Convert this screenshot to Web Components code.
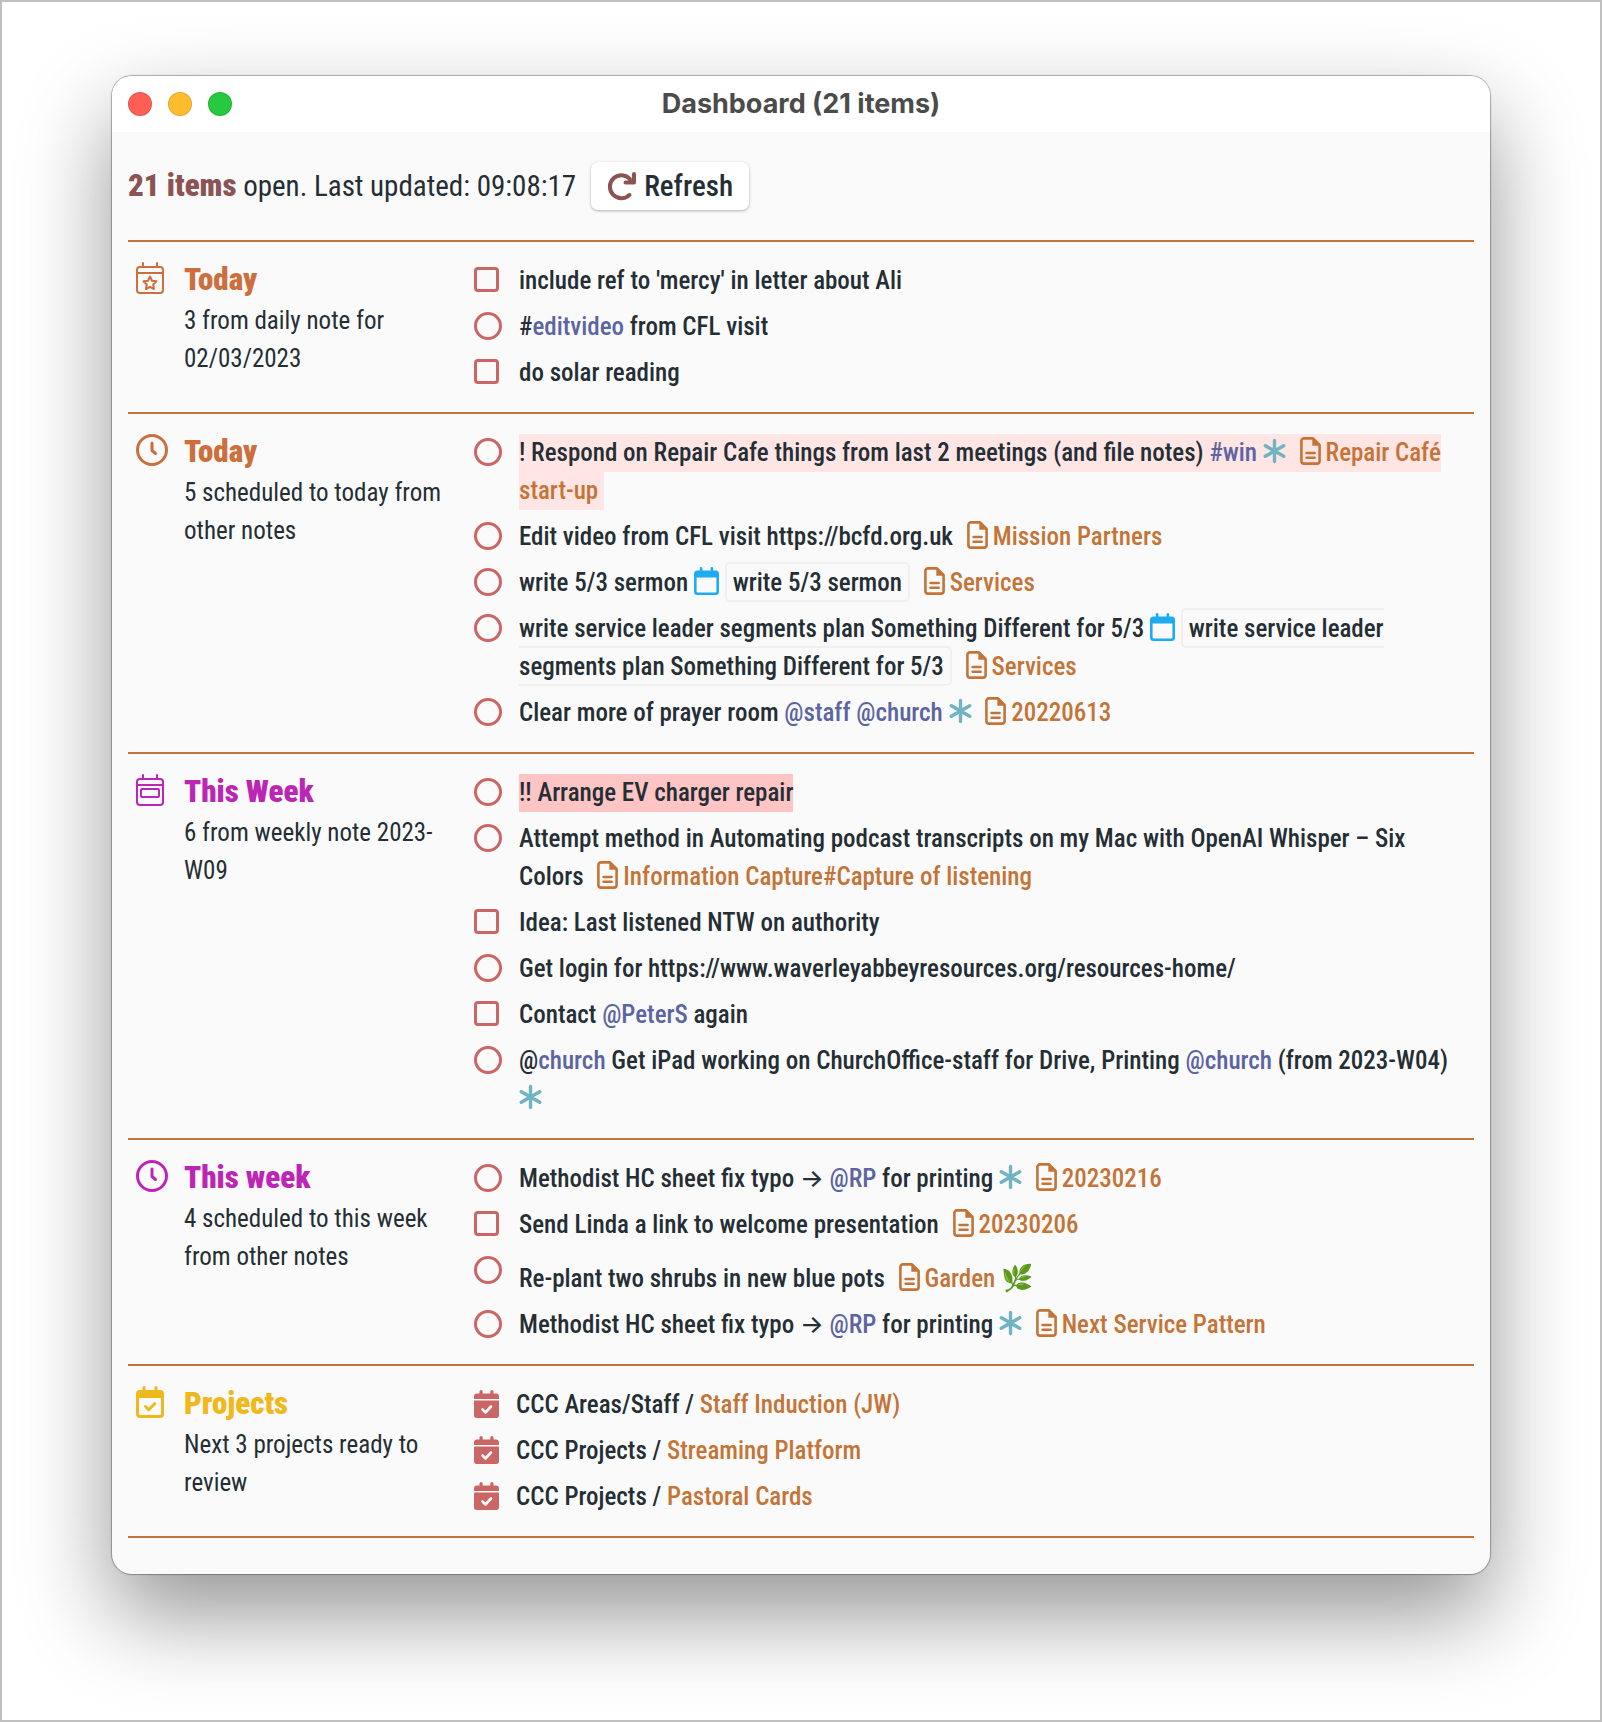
<!DOCTYPE html>
<html lang="en">
<head>
<meta charset="utf-8">
<meta name="viewport" content="width=device-width, initial-scale=1">
<title>Dashboard (21 items)</title>
<style>
html { box-sizing: border-box; }
body {
  box-sizing: border-box;
  margin: 0;
  min-height: 100vh;
  border: 2px solid #c0c0c0;
  padding: 74px 110px 146px;
  background: #fff;
  color: #242e34;
  font: 500 25px/38px "Roboto Condensed", Inter, Roboto, "Liberation Sans", sans-serif;
  --rule: #bf763e;
  --link: #c47437;
  --tag: #5c64a2;
  --marker: #cb6666;
  --accent: #8b5454;
}
</style>
</head>
<body>
<app-window heading="Dashboard (21 items)">
  <dash-summary count="21 items" text="open. Last updated: 09:08:17"></dash-summary>

  <dash-section heading="Today" icon="calendar-star" note="3 from daily note for 02/03/2023" style="--tone:#cc6f3c">
    <task-item kind="bullet">include ref to 'mercy' in letter about Ali</task-item>
    <task-item>#<text-tag>editvideo</text-tag> from CFL visit</task-item>
    <task-item kind="bullet">do solar reading</task-item>
  </dash-section>

  <dash-section heading="Today" icon="clock" note="5 scheduled to today from other notes" style="--tone:#cc6f3c">
    <task-item priority="1">! Respond on Repair Cafe things from last 2 meetings (and file notes) <text-tag>#win</text-tag> <dash-icon name="asterisk"></dash-icon> <note-link>Repair Café start-up</note-link>&nbsp;</task-item>
    <task-item>Edit video from CFL visit https://bcfd.org.uk <note-link>Mission Partners</note-link></task-item>
    <task-item>write 5/3 sermon <dash-icon name="calendar"></dash-icon> <event-box>write 5/3 sermon</event-box> <note-link>Services</note-link></task-item>
    <task-item>write service leader segments plan Something Different for 5/3 <dash-icon name="calendar"></dash-icon> <event-box>write service leader segments plan Something Different for 5/3</event-box> <note-link>Services</note-link></task-item>
    <task-item>Clear more of prayer room <text-tag>@staff</text-tag> <text-tag>@church</text-tag> <dash-icon name="asterisk"></dash-icon> <note-link>20220613</note-link></task-item>
  </dash-section>

  <dash-section heading="This Week" icon="calendar-week" note="6 from weekly note 2023-W09" style="--tone:#bb26b4">
    <task-item priority="2">!! Arrange EV charger repair</task-item>
    <task-item>Attempt method in Automating podcast transcripts on my Mac with OpenAI Whisper – Six Colors <note-link>Information Capture#Capture of listening</note-link></task-item>
    <task-item kind="bullet">Idea: Last listened NTW on authority</task-item>
    <task-item>Get login for https://www.waverleyabbeyresources.org/resources-home/</task-item>
    <task-item kind="bullet">Contact <text-tag>@PeterS</text-tag> again</task-item>
    <task-item>@<text-tag>church</text-tag> Get iPad working on ChurchOffice-staff for Drive, Printing <text-tag>@church</text-tag> (from 2023-W04) <dash-icon name="asterisk"></dash-icon></task-item>
  </dash-section>

  <dash-section heading="This week" icon="clock" note="4 scheduled to this week from other notes" style="--tone:#bb26b4">
    <task-item>Methodist HC sheet fix typo → <text-tag>@RP</text-tag> for printing <dash-icon name="asterisk"></dash-icon> <note-link>20230216</note-link></task-item>
    <task-item kind="bullet">Send Linda a link to welcome presentation <note-link>20230206</note-link></task-item>
    <task-item>Re-plant two shrubs in new blue pots <note-link emoji="🌿">Garden</note-link></task-item>
    <task-item>Methodist HC sheet fix typo → <text-tag>@RP</text-tag> for printing <dash-icon name="asterisk"></dash-icon> <note-link>Next Service Pattern</note-link></task-item>
  </dash-section>

  <dash-section heading="Projects" icon="calendar-check" note="Next 3 projects ready to review" style="--tone:#efb81b">
    <project-item folder="CCC Areas/Staff">Staff Induction (JW)</project-item>
    <project-item folder="CCC Projects">Streaming Platform</project-item>
    <project-item folder="CCC Projects">Pastoral Cards</project-item>
  </dash-section>
</app-window>

<script>
const icons = {
  'calendar-star': [28, 32, 'var(--tone)', `<g fill="none" stroke="currentColor" stroke-width="2" stroke-linecap="round" stroke-linejoin="round"><rect x="1" y="5" width="26" height="26" rx="3"/><path d="M1 11h26M7 1v4M21 1v4M14 14.500l2 4.200 4.500.600-3.300 3.200.800 4.500-4-2.200-4 2.200.800-4.500-3.300-3.200 4.500-.600z"/></g>`],
  'calendar-week': [28, 32, 'var(--tone)', `<g fill="none" stroke="currentColor" stroke-width="2" stroke-linecap="round" stroke-linejoin="round"><rect x="1" y="5" width="26" height="26" rx="3"/><path d="M1 11h26M7 1v4M21 1v4"/><rect x="5" y="15" width="18" height="8" rx="1"/></g>`],
  'clock': [32, 32, 'var(--tone)', `<g fill="none" stroke="currentColor" stroke-width="3" stroke-linecap="round" stroke-linejoin="round"><circle cx="16" cy="16" r="14.500"/><path d="M16 9v7.500l3.500 3"/></g>`],
  'calendar-check': [28, 32, 'var(--tone)', `<path fill="currentColor" d="M6.500 1.500a1.500 1.500 0 0 1 3 0V4h9V1.500a1.500 1.500 0 0 1 3 0V4H24a4 4 0 0 1 4 4v20a4 4 0 0 1-4 4H4a4 4 0 0 1-4-4V8a4 4 0 0 1 4-4h2.500zM3 12v16a1 1 0 0 0 1 1h20a1 1 0 0 0 1-1V12z"/><path d="M9.500 20.500l3.200 3.200 6-6" fill="none" stroke="currentColor" stroke-width="3" stroke-linecap="round" stroke-linejoin="round"/>`],
  'review': [25, 28, 'var(--marker)', `<path fill="currentColor" d="M5.500 1.600a1.600 1.600 0 0 1 3.200 0V3.500h7.600V1.600a1.600 1.600 0 0 1 3.200 0V3.500H22a3 3 0 0 1 3 3V9H0V6.500a3 3 0 0 1 3-3h2.500zM0 10.500h25v14.800a2.700 2.700 0 0 1-2.700 2.700H2.700A2.700 2.700 0 0 1 0 25.300z"/><path d="M8.500 19.500l3 3 5.500-6" fill="none" stroke="#fafafa" stroke-width="2.600" stroke-linecap="round" stroke-linejoin="round"/>`],
  'asterisk': [23, 28, '#70b3c2', `<path d="M11.500 3.500v21M2.300 8.700l18.400 10.600M20.700 8.700l-18.400 10.600" fill="none" stroke="currentColor" stroke-width="3.400" stroke-linecap="round"/>`],
  'calendar': [25, 28, '#1dabf2', `<path fill="currentColor" d="M5.800 1.300a1.300 1.300 0 0 1 2.600 0V3.500h8.200V1.300a1.300 1.300 0 0 1 2.600 0V3.500H21.500A3.500 3.500 0 0 1 25 7v17.500a3.500 3.500 0 0 1-3.500 3.500h-18A3.500 3.500 0 0 1 0 24.500V7a3.500 3.500 0 0 1 3.500-3.500h2.300zM2.600 10.500v14a1 1 0 0 0 1 1h17.800a1 1 0 0 0 1-1v-14z"/>`],
  'file': [21, 28, 'var(--link)', `<path d="M4 1.400h9l6.600 6.600v16a2.600 2.600 0 0 1-2.600 2.600H4A2.600 2.600 0 0 1 1.400 24V4A2.600 2.600 0 0 1 4 1.400zM6.600 16h8M6.600 20.700h8" fill="none" stroke="currentColor" stroke-width="2.600" stroke-linecap="round" stroke-linejoin="round"/><path d="M12.300 1.500v7.200h7.200z" fill="currentColor"/>`],
  'refresh': [29, 29, 'var(--accent)', `<path d="M22.500 22.800A11.500 11.500 0 1 1 23 7" fill="none" stroke="currentColor" stroke-width="4" stroke-linecap="round"/><path d="M27 2v8.500h-8.500" fill="none" stroke="currentColor" stroke-width="4" stroke-linecap="round" stroke-linejoin="round"/><path d="M22 6l5 4.500h-6z" fill="currentColor"/>`]
};

class View extends HTMLElement {
  constructor() {
    super();
    this.attachShadow({ mode: 'open' }).innerHTML = this.view();
  }
  prop(name) { return this.getAttribute(name) || ''; }
}

customElements.define('dash-icon', class extends View {
  view() {
    const [w, h, color, body] = icons[this.prop('name')];
    return `<style>:host{display:inline-block;vertical-align:-4px;line-height:0;color:${color}}svg{display:block}</style>
      <svg width="${w}" height="${h}" viewBox="0 0 ${w} ${h}" aria-hidden="true">${body}</svg>`;
  }
});

customElements.define('text-tag', class extends View {
  view() { return `<style>:host{display:inline;color:var(--tag)}</style><slot></slot>`; }
});

customElements.define('event-box', class extends View {
  view() {
    return `<style>:host{display:inline;padding:4px 6px 3px;border:2px solid #f0f0f0;border-radius:5px}</style><slot></slot>`;
  }
});

customElements.define('note-link', class extends View {
  view() {
    const emoji = this.prop('emoji');
    return `<style>
      :host{display:inline}
      a{color:var(--link);text-decoration:none}
      dash-icon{margin:0 5px 0 8px}
      .emoji{display:inline-block;padding-top:7px;font-size:26px}
      </style><a href="#note"><dash-icon name="file"></dash-icon><slot></slot>${emoji && ` <span class="emoji">${emoji}</span>`}</a>`;
  }
});

customElements.define('task-item', class extends View {
  view() {
    const bg = { 1: '#ffe5e4', 2: '#ffc4c4' }[this.prop('priority')];
    return `<style>
      :host{display:flex;gap:17px;padding:4px 0}
      .mark{flex:none;width:28px;height:38px}
      input{appearance:none;display:block;box-sizing:border-box;width:28px;height:28px;margin:4px 0 0;border:3px solid var(--marker);border-radius:50%}
      input.bullet{width:25px;height:25px;margin-top:5px;border-radius:4px}
      label{min-width:0}
      span{${bg ? `background:${bg};padding:4px 0 5px` : ''}}
      </style>
      <div class="mark"><input type="checkbox" id="done" class="${this.prop('kind')}"></div>
      <label for="done"><span><slot></slot></span></label>`;
  }
});

customElements.define('project-item', class extends View {
  view() {
    return `<style>
      :host{display:flex;gap:17px;padding:4px 0}
      dash-icon{flex:none;align-self:flex-start;margin-top:4px}
      a{color:var(--link);text-decoration:none}
      </style><dash-icon name="review"></dash-icon><div>${this.prop('folder')} / <a href="#project"><slot></slot></a></div>`;
  }
});

customElements.define('dash-section', class extends View {
  view() {
    return `<style>
      :host{display:grid;grid-template-columns:40px 282px minmax(0,1fr);padding:16px 12px 16px 8px;border-top:2px solid var(--rule)}
      :host(:last-of-type){border-bottom:2px solid var(--rule)}
      .icon{padding-top:4px}
      .head{padding-left:8px}
      h2{margin:0;font-size:31px;line-height:44px;font-weight:900;color:var(--tone)}
      p{margin:0;font-weight:400}
      .items{padding-left:16px}
      </style>
      <div class="icon"><dash-icon name="${this.prop('icon')}"></dash-icon></div>
      <div class="head"><h2>${this.prop('heading')}</h2><p>${this.prop('note')}</p></div>
      <div class="items"><slot></slot></div>`;
  }
});

customElements.define('dash-summary', class extends View {
  view() {
    return `<style>
      :host{display:flex;align-items:center;gap:15px;padding:30px 0;font-size:29px;font-weight:400}
      p{margin:0}
      strong{font-size:31px;font-weight:900;color:var(--accent)}
      button{display:flex;align-items:center;gap:8px;height:48px;padding:0 16px;border:0;border-radius:7px;background:#fff;color:inherit;font:inherit;font-weight:500;box-shadow:0 1px 3px rgba(0,0,0,.3)}
      </style>
      <p><strong>${this.prop('count')}</strong> ${this.prop('text')}</p>
      <button type="button"><dash-icon name="refresh"></dash-icon>Refresh</button>`;
  }
});

customElements.define('app-window', class extends View {
  view() {
    return `<style>
      :host{display:block;border-radius:20px;background:#fafafa;overflow:hidden;box-shadow:0 0 1px 1px rgba(0,0,0,.3),0 40px 90px rgba(0,0,0,.42)}
      header{display:grid;grid-template-columns:1fr auto 1fr;align-items:center;height:56px;padding:0 16px;background:#fff}
      .lights{display:flex;gap:16px}
      i{box-sizing:border-box;width:24px;height:24px;border-radius:50%;border:1px solid rgba(0,0,0,.12)}
      h1{margin:0;font:700 27px/54px Inter,"Liberation Sans",sans-serif;color:#4b4b4b}
      main{padding:0 16px 36px}
      </style>
      <header><div class="lights"><i style="background:#ff5f57"></i><i style="background:#febc2e"></i><i style="background:#28c840"></i></div><h1>${this.prop('heading')}</h1></header>
      <main><slot></slot></main>`;
  }
});
</script>
</body>
</html>
